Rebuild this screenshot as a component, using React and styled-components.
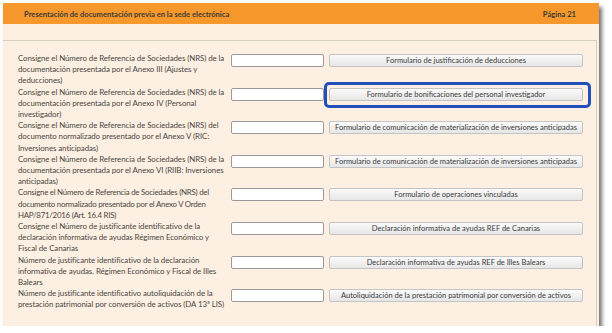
import styled, { createGlobalStyle } from 'styled-components';

const GlobalStyle = createGlobalStyle`
  html, body {
    margin: 0;
    padding: 0;
    background: #ffffff;
  }
  body {
    font-family: Lato, "Open Sans", sans-serif;
  }
`;

const rows = [
  {
    label:
      'Consigne el Número de Referencia de Sociedades (NRS) de la documentación presentada por el Anexo III (Ajustes y deducciones)',
    button: 'Formulario de justificación de deducciones',
  },
  {
    label:
      'Consigne el Número de Referencia de Sociedades (NRS) de la documentación presentada por el Anexo IV (Personal investigador)',
    button: 'Formulario de bonificaciones del personal investigador',
    focused: true,
  },
  {
    label:
      'Consigne el Número de Referencia de Sociedades (NRS) del documento normalizado presentado por el Anexo V (RIC: Inversiones anticipadas)',
    button: 'Formulario de comunicación de materialización de inversiones anticipadas',
  },
  {
    label:
      'Consigne el Número de Referencia de Sociedades (NRS) de la documentación presentada por el Anexo VI (RIIB: Inversiones anticipadas)',
    button: 'Formulario de comunicación de materialización de inversiones anticipadas',
  },
  {
    label:
      'Consigne el Número de Referencia de Sociedades (NRS) del documento normalizado presentado por el Anexo V Orden HAP/871/2016 (Art. 16.4 RIS)',
    button: 'Formulario de operaciones vinculadas',
    tight: true,
  },
  {
    label:
      'Consigne el Número de justificante identificativo de la declaración informativa de ayudas Régimen Económico y Fiscal de Canarias',
    button: 'Declaración informativa de ayudas REF de Canarias',
  },
  {
    label:
      'Número de justificante identificativo de la declaración informativa de ayudas. Régimen Económico y Fiscal de Illes Balears',
    button: 'Declaración informativa de ayudas REF de Illes Balears',
  },
  {
    label:
      'Número de justificante identificativo autoliquidación de la prestación patrimonial por conversión de activos (DA 13ª LIS)',
    button: 'Autoliquidación de la prestación patrimonial por conversión de activos',
    short: true,
  },
];

const App = () => {
  return (
    <>
      <GlobalStyle />
      <Window>
        <Header>
          <span>Presentación de documentación previa en la sede electrónica</span>
          <span>Página 21</span>
        </Header>
        <Band />
        <Body>
          {rows.map((row, i) => (
            <Row key={i} $short={row.short}>
              <Label $tight={row.tight}>{row.label}</Label>
              <Field type="text" />
              <ButtonWrap $focused={row.focused}>
                <FormButton>{row.button}</FormButton>
              </ButtonWrap>
            </Row>
          ))}
        </Body>
      </Window>
    </>
  );
};

const Window = styled.div`
  margin: 3px 0 0 3px;
  width: 596px;
  background: #fdf0e2;
  box-shadow: 3px 4px 4px rgba(0, 0, 0, 0.55);
`;

const Header = styled.div`
  height: 21px;
  background: #f6982c;
  display: flex;
  align-items: center;
  justify-content: space-between;
  padding: 0 23px 0 21px;
  font-size: 7.6px;
  font-weight: 700;
  color: #3d3a36;
`;

const Band = styled.div`
  height: 16px;
`;

const Body = styled.div`
  width: 594px;
  box-sizing: border-box;
  border-top: 1px solid #d6cdc3;
  border-right: 1px solid #d6cdc3;
  padding: 12px 0 15px 15px;
`;

const Row = styled.div`
  display: grid;
  grid-template-columns: 213px 98px 254px;
  align-items: start;
  height: ${(props) => (props.$short ? '22.4px' : '33.6px')};
`;

const Label = styled.div`
  padding-right: ${(props) => (props.$tight ? '0' : '3px')};
  font-size: 7.9px;
  letter-spacing: ${(props) => (props.$tight ? '-0.25px' : '-0.08px')};
  line-height: 11.2px;
  color: #4a4642;
`;

const Field = styled.input`
  display: block;
  box-sizing: border-box;
  margin: 1px 0 0;
  width: 93px;
  height: 13px;
  border: 1px solid #9a9a9a;
  border-radius: 2px;
  background: #ffffff;
  padding: 0;
`;

const ButtonWrap = styled.div`
  position: relative;
  margin-top: 1px;

  &::after {
    content: '';
    display: ${(props) => (props.$focused ? 'block' : 'none')};
    position: absolute;
    left: -5px;
    right: -8px;
    top: -6px;
    bottom: -7px;
    border: 3px solid #2150b8;
    border-radius: 5px;
  }
`;

const FormButton = styled.button`
  display: block;
  box-sizing: border-box;
  width: 254px;
  height: 13px;
  padding: 0;
  border: 1px solid #c4c4c4;
  border-radius: 2px;
  background: linear-gradient(#fbfbfb, #e6e6e6);
  font-family: Lato, "Open Sans", sans-serif;
  font-size: 7.5px;
  line-height: 11px;
  color: #3a3a3a;
  white-space: nowrap;
  overflow: hidden;
  text-align: center;
`;

export default App;
